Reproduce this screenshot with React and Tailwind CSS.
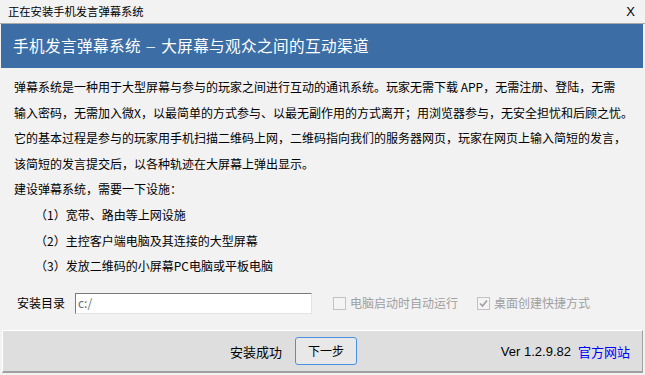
import React from "react";

const font = { fontFamily: '"Noto Sans CJK SC", "Noto Sans", sans-serif' };

export default function App() {
  return (
    <div className="w-[645px] h-[375px] bg-[#f2f2f2] flex flex-col overflow-hidden text-black" style={font}>
      {/* title bar */}
      <div className="h-[24px] shrink-0 bg-[#f2f2f2] border-b border-[#a9a9a9] flex items-center justify-between pl-[8px] pr-[10px]">
        <span className="text-[11.3px] leading-none">正在安装手机发言弹幕系统</span>
        <span className="text-[13px] leading-none" style={{ fontFamily: '"Liberation Sans", sans-serif' }}>X</span>
      </div>
      {/* header */}
      <div className="h-[44px] shrink-0 bg-[#3c6ea5] flex items-center pl-[12px] ml-[1px] mr-[2px]">
        <span className="text-white text-[15.6px] leading-none tracking-[0.4px]">手机发言弹幕系统 <span className="text-[12px]">－</span> 大屏幕与观众之间的互动渠道</span>
      </div>
      {/* body */}
      <div className="flex-1 flex flex-col pl-[14px] pt-[6px] text-[12px] leading-[25.6px]">
        <p>弹幕系统是一种用于大型屏幕与参与的玩家之间进行互动的通讯系统。玩家无需下载 APP，无需注册、登陆，无需</p>
        <p>输入密码，无需加入微X，以最简单的方式参与、以最无副作用的方式离开；用浏览器参与，无安全担忧和后顾之忧。</p>
        <p>它的基本过程是参与的玩家用手机扫描二维码上网，二维码指向我们的服务器网页，玩家在网页上输入简短的发言，</p>
        <p>该简短的发言提交后，以各种轨迹在大屏幕上弹出显示。</p>
        <p>建设弹幕系统，需要一下设施：</p>
        <p className="pl-[21px]">（1）宽带、路由等上网设施</p>
        <p className="pl-[21px]">（2）主控客户端电脑及其连接的大型屏幕</p>
        <p className="pl-[21px]">（3）发放二维码的小屏幕PC电脑或平板电脑</p>
        <div className="flex items-center mt-[14px] h-[21px]">
          <span className="ml-[3px] w-[58px] text-[12px] leading-none">安装目录</span>
          <div className="w-[237px] h-[21px] bg-white border border-t-[#7a7a7a] border-l-[#7a7a7a] border-r-[#e3e3e3] border-b-[#e3e3e3] flex items-center pl-[2px]">
            <span className="text-[12px] leading-none text-[#6d6d6d]">c:/</span>
          </div>
          <div className="flex items-center ml-[21px] text-[#a0a0a0]">
            <span className="w-[13px] h-[13px] border border-[#c2c2c2] bg-[#f4f4f4]" />
            <span className="ml-[4px] text-[12px] leading-none">电脑启动时自动运行</span>
          </div>
          <div className="flex items-center ml-[19px] text-[#a0a0a0]">
            <span className="w-[13px] h-[13px] border border-[#c2c2c2] bg-[#f4f4f4] flex items-center justify-center">
              <svg width="9" height="9" viewBox="0 0 9 9">
                <path d="M1 4.5 L3.5 7 L8 1.5" stroke="#a0a0a0" strokeWidth="1.6" fill="none" />
              </svg>
            </span>
            <span className="ml-[4px] text-[12px] leading-none">桌面创建快捷方式</span>
          </div>
        </div>
      </div>
      {/* footer */}
      <div className="h-[43px] shrink-0 mx-[2px] mb-[2px] bg-[#dedede] border-t border-l border-white border-b-2 border-r border-b-[#a0a0a0] border-r-[#a0a0a0] flex items-center">
        <span className="ml-[227px] text-[13px] leading-none">安装成功</span>
        <button className="ml-[13px] w-[62px] h-[28px] rounded-[3px] border border-[#4a90e2] bg-[#e8e8e8] text-[12px] leading-none" style={font}>下一步</button>
        <span className="ml-auto text-[13px] leading-none" style={{ fontFamily: '"Liberation Sans", sans-serif' }}>Ver 1.2.9.82</span>
        <span className="ml-[7px] mr-[12px] text-[13px] leading-none text-[#0000ff]">官方网站</span>
      </div>
    </div>
  );
}
